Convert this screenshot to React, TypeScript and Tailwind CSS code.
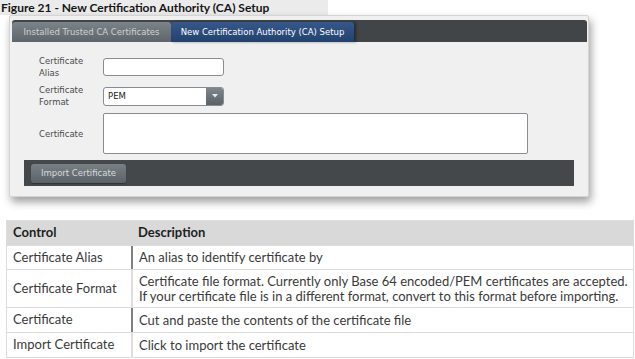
import React from 'react';

const ui = { fontFamily: '"DejaVu Sans", Verdana, sans-serif' };
const doc = { fontFamily: 'Lato, "Noto Sans", sans-serif' };

const rows = [
  { control: 'Certificate Alias', desc: ['An alias to identify certificate by'], dark: true, h: 'h-[24px]' },
  {
    control: 'Certificate Format',
    desc: [
      'Certificate file format. Currently only Base 64 encoded/PEM certificates are accepted.',
      'If your certificate file is in a different format, convert to this format before importing.',
    ],
    dark: false,
    h: 'h-[38px]',
  },
  { control: 'Certificate', desc: ['Cut and paste the contents of the certificate file'], dark: true, h: 'h-[25px]' },
  { control: 'Import Certificate', desc: ['Click to import the certificate'], dark: false, h: 'h-[25px]' },
];

const CaSetupPanel = () => {
  return (
    <div
      className="ml-[9px] w-[580px] h-[182px] bg-[#f0f0f0] border border-[#d4d4d4] rounded-[2px] shadow-[2px_5px_9px_rgba(0,0,0,0.38)] pt-[4px] pl-[2px] pr-[1px]"
      style={ui}
    >
      {/* tab strip */}
      <div className="h-[22px] bg-[#414548] rounded-t-[3px] flex items-end">
        <div className="w-[159px] h-[20px] rounded-t-[3px] bg-gradient-to-b from-[#7c8489] to-[#5e656a] text-[#cdd1d4] text-[8.5px] flex items-center justify-center">
          Installed Trusted CA Certificates
        </div>
        <div className="w-[183px] h-[20px] rounded-t-[3px] bg-gradient-to-b from-[#36588a] to-[#22416f] text-white text-[8.5px] flex items-center justify-center shadow-[2px_0_3px_rgba(0,0,0,0.4)]">
          New Certification Authority (CA) Setup
        </div>
      </div>

      {/* form */}
      <div className="pl-[27px] pt-[13px] flex flex-col gap-[5px] text-[#4a4a4a] text-[8.5px] leading-[12px]">
        <div className="h-[24px] flex items-center">
          <div className="w-[64px]">
            Certificate
            <br />
            Alias
          </div>
          <div className="w-[121px] h-[18px] bg-white border border-[#878c91] rounded-[3px]" />
        </div>
        <div className="h-[24px] flex items-center">
          <div className="w-[64px]">
            Certificate
            <br />
            Format
          </div>
          <div className="w-[121px] h-[19px] bg-white border border-[#878c91] rounded-[3px] flex items-center overflow-hidden">
            <span className="flex-1 pl-[4px] text-[#222]">PEM</span>
            <span className="w-[17px] h-full bg-gradient-to-b from-[#80878c] to-[#5b6267] flex items-center justify-center">
              <svg width="6" height="4" viewBox="0 0 6 4">
                <path d="M0 0h6L3 3.5z" fill="#e8eaec" />
              </svg>
            </span>
          </div>
        </div>
        <div className="h-[41px] flex items-center">
          <div className="w-[64px]">Certificate</div>
          <div className="w-[425px] h-[41px] bg-white border border-[#878c91] rounded-[2px]" />
        </div>
      </div>

      {/* action bar */}
      <div className="mt-[6px] ml-[12px] w-[550px] h-[26px] bg-[#44484b] flex items-center pl-[7px]">
        <div className="w-[95px] h-[19px] rounded-[3px] bg-gradient-to-b from-[#788085] to-[#5c6368] text-[#d6d9db] text-[8.5px] flex items-center justify-center shadow-[0_1px_1px_rgba(0,0,0,0.3)]">
          Import Certificate
        </div>
      </div>
    </div>
  );
};

const ControlTable = () => {
  return (
    <div className="ml-[6px] w-[628px] border border-[#dcdcdc] text-[13px] whitespace-nowrap" style={doc}>
      <div className="h-[24px] flex items-center bg-[#d9d9d9] text-[#1e1e1e] font-bold">
        <div className="w-[124px] pl-[6px]">Control</div>
        <div className="pl-[7px]">Description</div>
      </div>
      {rows.map((r) => (
        <div key={r.control} className={`${r.h} flex border-t border-[#dcdcdc] text-[#3a3a3a]`}>
          <div className="w-[124px] pl-[6px] flex items-center">{r.control}</div>
          <div
            className={`flex-1 pl-[6px] flex flex-col justify-center leading-[15px] border-l-2 ${
              r.dark ? 'border-[#808080]' : 'border-[#dedede]'
            }`}
          >
            {r.desc.map((d) => (
              <div key={d}>{d}</div>
            ))}
          </div>
        </div>
      ))}
    </div>
  );
};

export default function App() {
  return (
    <div className="w-[635px] h-[359px] bg-white overflow-hidden">
      <div
        className="w-[328px] h-[15px] bg-[#ebebeb] pl-[1px] text-[12px] leading-[15px] font-bold text-[#151515]"
        style={doc}
      >
        Figure 21 - New Certification Authority (CA) Setup
      </div>
      <CaSetupPanel />
      <div className="h-[23px]" />
      <ControlTable />
    </div>
  );
}
